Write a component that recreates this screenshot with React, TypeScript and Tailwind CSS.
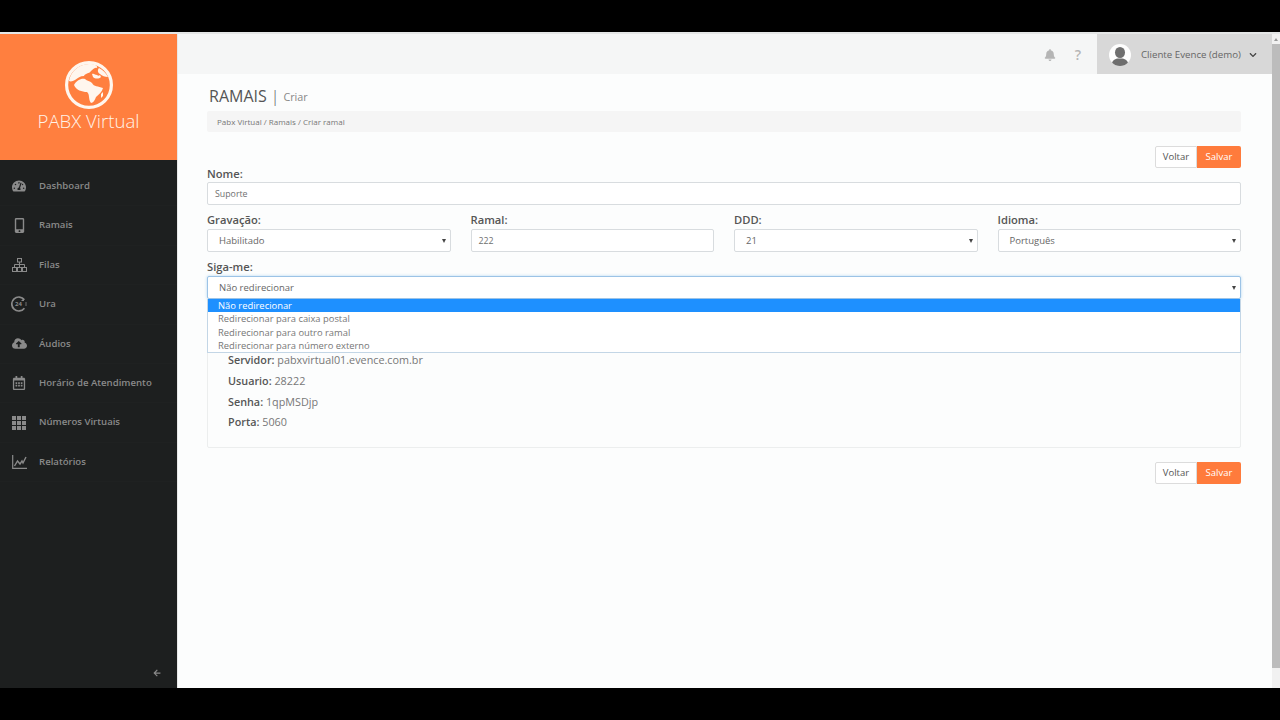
import React from 'react';
import {
  FaTachometerAlt,
  FaMobileAlt,
  FaCloudUploadAlt,
  FaRegCalendarAlt,
  FaBell,
  FaChevronDown,
  FaArrowLeft,
} from 'react-icons/fa';

function Globe() {
  return (
    <svg viewBox="0 0 48 48" className="w-[48px] h-[48px]" fill="#fff6ee">
      <circle cx="24" cy="24" r="22.4" fill="none" stroke="#fff6ee" strokeWidth="3.2" />
      <path d="M4 20C5 12 13 3 24 3c6 0 9 2 8 4-3-1-4 2-6 3-2 3-6 2-7 5-4 0-6 2-9 4-2 1-4 2-6 1z" />
      <path d="M34 7c4 2 7 5 9 9-3 0-6-1-8-3-2-1-3-4-1-6z" />
      <path d="M27 13c2-1 3 1 5 1 1 1 2 1 3 0l1 2c-2 2-6 2-8 0z" />
      <path d="M9 24c2-4 7-7 11-6 2 2 5 2 7 4 2 4 6 3 11 5-1 4-4 6-7 9-1 3-3 6-5 6-3-4-1-9-4-11-5 0-11-2-13-7z" />
      <path d="M36 33l2-2 0 4-2 2z" />
    </svg>
  );
}

// Icone 24h do menu Ura
function Icon24() {
  return (
    <svg viewBox="0 0 16 16" className="w-[16px] h-[16px]" fill="none" stroke="currentColor">
      <path d="M13.4 3.800A7 7 0 1 0 13.400 12.200" strokeWidth="1.700" />
      <path d="M13 2v3h-3z" fill="currentColor" stroke="none" />
      <path d="M15 6.500v3.500" strokeWidth="1.500" strokeDasharray="1 1" />
      <text x="7.500" y="10.300" textAnchor="middle" fontSize="6" fontWeight="700" fill="currentColor" stroke="none">
        24
      </text>
    </svg>
  );
}

function IconFilas() {
  return (
    <svg viewBox="0 0 15 14" className="w-[15px] h-[14px]" fill="none" stroke="currentColor" strokeWidth="1">
      <rect x="5.500" y="0.500" width="4" height="3.500" />
      <path d="M7.500 4v5M2.500 9V6.500h10V9" />
      <rect x="0.500" y="9.500" width="4" height="4" />
      <rect x="5.500" y="9.500" width="4" height="4" />
      <rect x="10.500" y="9.500" width="4" height="4" />
    </svg>
  );
}

function IconGrid() {
  return (
    <svg viewBox="0 0 14 14" className="w-[14px] h-[14px]" fill="currentColor">
      {[0, 5, 10].map((y) =>
        [0, 5, 10].map((x) => <rect key={`${x}-${y}`} x={x} y={y} width="4" height="4" />)
      )}
    </svg>
  );
}

function IconChart() {
  return (
    <svg viewBox="0 0 15 14" className="w-[15px] h-[14px]" fill="none" stroke="currentColor">
      <path d="M.7 0v13.300H15" strokeWidth="1.200" />
      <path d="M2.500 11l3-5 2.500 3 2-3 1 2 3-6" strokeWidth="1.400" />
    </svg>
  );
}

function Avatar() {
  return (
    <svg viewBox="0 0 22 22" className="w-[22px] h-[22px]">
      <circle cx="11" cy="11" r="11" fill="#fdfdfd" />
      <clipPath id="av">
        <circle cx="11" cy="11" r="11" />
      </clipPath>
      <g clipPath="url(#av)" fill="#6e6e6e">
        <ellipse cx="11" cy="8.500" rx="5" ry="5.500" />
        <path d="M2.500 22c0-5 3-7 6-7.500h5c3 .5 6 2.500 6 7.500z" />
      </g>
    </svg>
  );
}

function Caret() {
  return <div className="w-0 h-0 border-x-[2.500px] border-x-transparent border-t-[4px] border-t-[#444]" />;
}

const menu = [
  { label: 'Dashboard', icon: <FaTachometerAlt size={14} /> },
  { label: 'Ramais', icon: <FaMobileAlt size={15} /> },
  { label: 'Filas', icon: <IconFilas /> },
  { label: 'Ura', icon: <Icon24 /> },
  { label: 'Áudios', icon: <FaCloudUploadAlt size={15} /> },
  { label: 'Horário de Atendimento', icon: <FaRegCalendarAlt size={14} /> },
  { label: 'Números Virtuais', icon: <IconGrid /> },
  { label: 'Relatórios', icon: <IconChart /> },
];

function Label({ children }: { children: React.ReactNode }) {
  return <label className="block text-[11.2px] leading-[14px] font-semibold text-[#555] mb-[2px]">{children}</label>;
}

function TextField({ label, value }: { label: string; value: string }) {
  return (
    <div>
      <Label>{label}</Label>
      <div className="h-[23px] flex items-center border border-[#d8dcdf] rounded-[2px] bg-white pl-[7px] pt-[2px] text-[8.800px] text-[#707070]">
        {value}
      </div>
    </div>
  );
}

function SelectField({ label, value }: { label: string; value: string }) {
  return (
    <div>
      <Label>{label}</Label>
      <div className="h-[23px] flex items-center justify-between border border-[#d8dcdf] rounded-[2px] bg-white pl-[11px] pr-[4px] text-[9.500px] text-[#666]">
        <span className="pt-[2px]">{value}</span>
        <Caret />
      </div>
    </div>
  );
}

function Buttons() {
  return (
    <div className="flex justify-end">
      <div className="h-[22px] w-[42px] flex items-center justify-center border border-[#dcdcdc] rounded-l-[2px] bg-white text-[9.500px] text-[#555]">
        Voltar
      </div>
      <div className="h-[22px] w-[44px] flex items-center justify-center rounded-r-[2px] bg-[#ff7b3c] text-[9.500px] text-white">
        Salvar
      </div>
    </div>
  );
}

function Info({ name, value }: { name: string; value: string }) {
  return (
    <p className="text-[10.8px] leading-[14px] text-[#777] mb-[6.8px]">
      <b className="font-semibold text-[#555]">{name}</b> {value}
    </p>
  );
}

export default function App() {
  return (
    <div className="w-[1280px] h-[720px] overflow-hidden flex flex-col bg-black font-['Open_Sans',sans-serif]">
      <div className="h-[32px] shrink-0" />
      <div className="h-[2px] shrink-0 bg-[#e4e6e6]" />
      <div className="flex-1 min-h-0 flex">
        {/* Sidebar */}
        <aside className="w-[177px] shrink-0 flex flex-col bg-[#1d1f1f]">
          <div className="h-[126px] shrink-0 bg-[#ff7f3f] flex flex-col items-center pt-[27px] text-[#fff3e8]">
            <Globe />
            <span className="text-[18.600px] leading-[24px] font-light">PABX Virtual</span>
          </div>
          <nav className="pt-[7px] flex-1">
            {menu.map((item) => (
              <div key={item.label} className="h-[39.4px] flex items-center border-b border-[#1f2121] text-[#8a8a8a]">
                <span className="w-[39px] flex justify-center pr-[1px]">{item.icon}</span>
                <span className="text-[9.600px] font-semibold">{item.label}</span>
              </div>
            ))}
          </nav>
          <div className="h-[30px] flex justify-end pr-[16px] pt-[11px] text-[#8a8a8a]">
            <FaArrowLeft size={8} />
          </div>
        </aside>

        {/* Conteudo */}
        <div className="flex-1 min-w-0 flex flex-col bg-[#fcfdfd] border-l border-[#e8e8e8]">
          <header className="h-[40px] shrink-0 flex justify-end bg-[#f5f6f6]">
            <div className="flex items-center gap-[19px] pr-[16px] pt-[2px] text-[#b5b5b5]">
              <FaBell size={12} />
              <span className="text-[14px] leading-none font-semibold">?</span>
            </div>
            <div className="w-[175px] flex items-center bg-[#d8d8d8] pl-[12px] pt-[2px]">
              <Avatar />
              <span className="ml-[10px] text-[9.700px] text-[#666] whitespace-nowrap">Cliente Evence (demo)</span>
              <FaChevronDown size={8} className="ml-[8px] text-[#444]" />
            </div>
          </header>

          <main className="flex-1 pl-[29px] pr-[31px]">
            <div className="h-[37px] flex items-center pl-[2px] pt-[6px]">
              <span className="text-[16px] text-[#555]">RAMAIS</span>
              <span className="mx-[4px] text-[16px] font-light text-[#555]">|</span>
              <span className="text-[10.800px] text-[#888] pt-[3px]">Criar</span>
            </div>
            <div className="h-[21px] flex items-center bg-[#f5f5f5] rounded-[2px] pl-[10px] pt-[1px] text-[8px] text-[#777]">
              Pabx Virtual / Ramais / Criar ramal
            </div>
            <div className="mt-[14px]">
              <Buttons />
            </div>

            <div className="mt-[-1px] mb-[-1px] [&_label]:mb-[1px]">
              <TextField label="Nome:" value="Suporte" />
            </div>
            <div className="mt-[9px] grid grid-cols-4 gap-x-[20px]">
              <SelectField label="Gravação:" value="Habilitado" />
              <TextField label="Ramal:" value="222" />
              <SelectField label="DDD:" value="21" />
              <SelectField label="Idioma:" value="Português" />
            </div>

            <div className="mt-[8px] relative">
              <Label>Siga-me:</Label>
              <div className="h-[23px] flex items-center justify-between border border-[#9cc3e6] rounded-[2px] bg-white pl-[11px] pr-[4px] text-[9.500px] text-[#666] shadow-[0_0_3px_rgba(102,175,233,0.5)]">
                <span className="pt-[1px]">Não redirecionar</span>
                <Caret />
              </div>
              <div className="absolute z-10 left-0 right-0 top-[39px] h-[54px] border-x border-b border-[#c3d6e6] bg-white text-[9.400px] leading-[13.3px] text-[#777]">
                <div className="bg-[#1e90ff] text-white pl-[10px]">Não redirecionar</div>
                <div className="pl-[10px]">Redirecionar para caixa postal</div>
                <div className="pl-[10px]">Redirecionar para outro ramal</div>
                <div className="pl-[10px]">Redirecionar para número externo</div>
              </div>
            </div>

            <div className="mt-[9px] h-[140px] border border-[#eceeee] rounded-[2px] pl-[20px] pt-[44px]">
              <Info name="Servidor:" value="pabxvirtual01.evence.com.br" />
              <Info name="Usuario:" value="28222" />
              <Info name="Senha:" value="1qpMSDjp" />
              <Info name="Porta:" value="5060" />
            </div>

            <div className="mt-[14px]">
              <Buttons />
            </div>
          </main>
        </div>

        {/* Barra de rolagem */}
        <div className="w-[8px] shrink-0 flex flex-col bg-[#f1f1f1]">
          <div className="h-[10px] flex items-center justify-center">
            <div className="w-0 h-0 border-x-[2px] border-x-transparent border-b-[3px] border-b-[#999]" />
          </div>
          <div className="h-[624px] bg-[#bcbcbc]" />
        </div>
      </div>
      <div className="h-[32px] shrink-0" />
    </div>
  );
}
